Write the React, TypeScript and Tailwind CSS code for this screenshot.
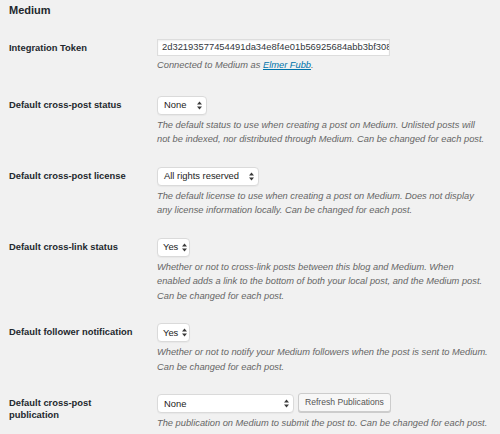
import React from "react";

const Arrows = () => (
  <svg width="5" height="9" viewBox="0 0 5 9" className="shrink-0">
    <polygon points="0,3.6 2.5,0.4 5,3.6" fill="#3a3a3a" />
    <polygon points="0,5.4 5,5.4 2.5,8.6" fill="#3a3a3a" />
  </svg>
);

const Select = ({
  value,
  width,
  pad = "pl-[6px] pr-[4px]",
}: {
  value: string;
  width: string;
  pad?: string;
}) => (
  <div
    className={`flex h-[19px] items-center justify-between rounded-[4px] border border-[#dadada] bg-white text-[9.4px] text-[#222] shadow-[0_1px_1px_rgba(0,0,0,0.04)] ${pad} ${width}`}
  >
    <span className="leading-none">{value}</span>
    <Arrows />
  </div>
);

const Desc = ({ lines }: { lines: React.ReactNode[] }) => (
  <p className="mt-[3px] text-[9.3px] italic leading-[14.5px] text-[#666]">
    {lines.map((l, i) => (
      <span key={i} className="block whitespace-nowrap">
        {l}
      </span>
    ))}
  </p>
);

const Row = ({
  label,
  children,
}: {
  label: React.ReactNode;
  children: React.ReactNode;
}) => (
  <div className="flex">
    <div className="w-[148px] shrink-0 pt-[13px] pr-[10px] text-[9.4px] font-bold leading-[12px] text-[#23282d]">
      {label}
    </div>
    <div className="flex-1 py-[10px]">{children}</div>
  </div>
);

export default function App() {
  return (
    <div
      className="min-h-[434px] w-[500px] bg-[#f1f1f1] pl-[9px] pr-[10px]"
      style={{ fontFamily: '"Liberation Sans", Arial, Helvetica, sans-serif' }}
    >
      <div className="h-[29px] pt-[4px] text-[11px] font-bold leading-[13px] text-[#23282d]">
        Medium
      </div>

      <div className="flex">
        <div className="w-[148px] shrink-0 pt-[13px] pr-[10px] text-[9.4px] font-bold leading-[12px] text-[#23282d]">
          Integration Token
        </div>
        <div className="flex-1 pt-[10px] pb-[13px]">
          <div className="flex h-[17px] w-[233px] items-center overflow-hidden whitespace-nowrap border border-[#dddddd] bg-white pl-[4px] text-[9.4px] text-[#32373c] shadow-[inset_0_1px_2px_rgba(0,0,0,0.07)]">
            2d32193577454491da34e8f4e01b56925684abb3bf308f
          </div>
          <p className="mt-[2px] text-[9.3px] italic leading-[14.5px] text-[#666]">
            Connected to Medium as{" "}
            <a href="#" className="text-[#0073aa] underline">
              Elmer Fubb
            </a>
            .
          </p>
        </div>
      </div>

      <Row label="Default cross-post status">
        <Select value="None" width="w-[50px]" />
        <Desc
          lines={[
            "The default status to use when creating a post on Medium. Unlisted posts will",
            "not be indexed, nor distributed through Medium. Can be changed for each post.",
          ]}
        />
      </Row>

      <Row label="Default cross-post license">
        <Select value="All rights reserved" width="w-[102px]" />
        <Desc
          lines={[
            "The default license to use when creating a post on Medium. Does not display",
            "any license information locally. Can be changed for each post.",
          ]}
        />
      </Row>

      <Row label="Default cross-link status">
        <Select value="Yes" width="w-[33px]" pad="pl-[5px] pr-[2px]" />
        <Desc
          lines={[
            "Whether or not to cross-link posts between this blog and Medium. When",
            "enabled adds a link to the bottom of both your local post, and the Medium post.",
            "Can be changed for each post.",
          ]}
        />
      </Row>

      <Row label="Default follower notification">
        <Select value="Yes" width="w-[33px]" pad="pl-[5px] pr-[2px]" />
        <Desc
          lines={[
            "Whether or not to notify your Medium followers when the post is sent to Medium.",
            "Can be changed for each post.",
          ]}
        />
      </Row>

      <Row
        label={
          <>
            Default cross-post
            <br />
            publication
          </>
        }
      >
        <div className="flex items-start gap-[4px]">
          <Select value="None" width="w-[137px]" />
          <button className="-mt-[1px] h-[19px] rounded-[3px] border border-[#cccccc] bg-[#f7f7f7] px-[6px] text-[8.6px] leading-none text-[#555] shadow-[0_1px_0_#ccc]">
            Refresh Publications
          </button>
        </div>
        <Desc
          lines={[
            "The publication on Medium to submit the post to. Can be changed for each post.",
          ]}
        />
      </Row>
    </div>
  );
}
